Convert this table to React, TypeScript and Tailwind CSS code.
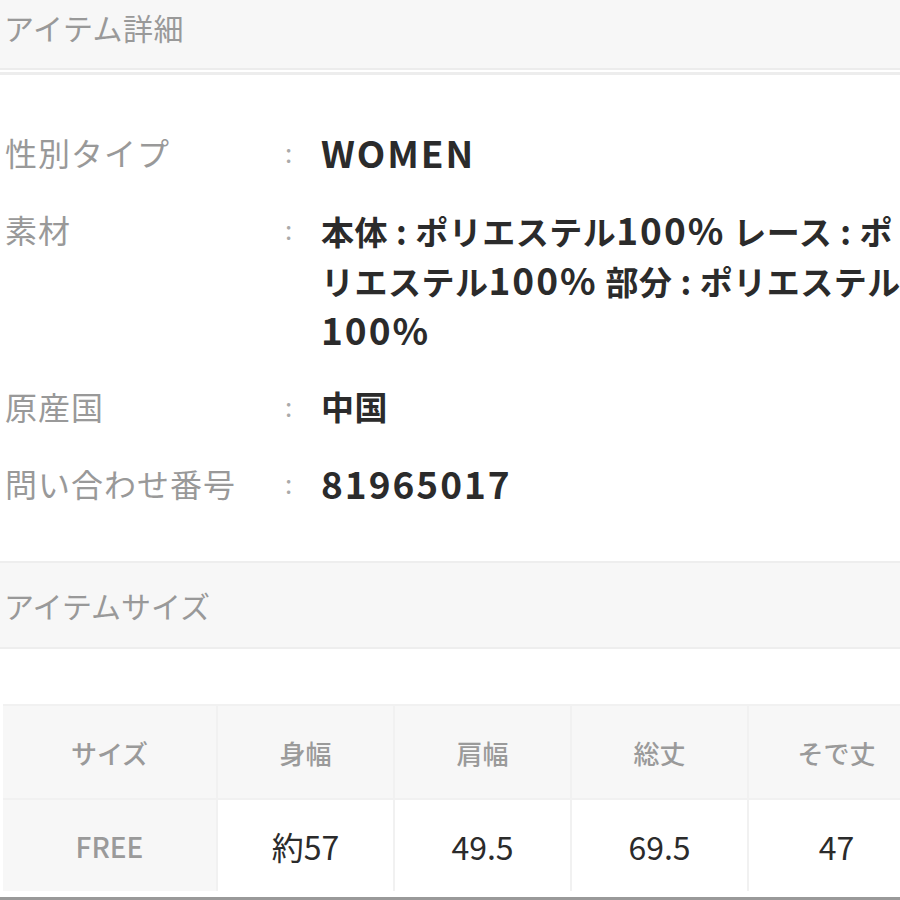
import React from "react";

const font = { fontFamily: '"Noto Sans CJK JP", "Noto Sans", sans-serif' };

function Mixed({ text }: { text: string }) {
  const parts = text.match(/[A-Za-z0-9%.]+|[^A-Za-z0-9%.]+/g) || [];
  return (
    <>
      {parts.map((p, i) =>
        /[A-Za-z0-9%.]/.test(p[0]) ? (
          <span key={i} className="text-[37px] tracking-[2px] font-semibold">
            {p}
          </span>
        ) : (
          <span key={i}>{p}</span>
        )
      )}
    </>
  );
}

function Row({ label, lines }: { label: string; lines: string[] }) {
  return (
    <div className="flex items-start">
      <div className="w-[285px] shrink-0 pl-[5px] text-[32px] leading-[50px] tracking-[1px] text-[#999999]">
        {label}
      </div>
      <div className="w-[36px] shrink-0 text-[26px] leading-[50px] text-[#aaaaaa]">:</div>
      <div className="flex flex-col font-bold text-[#2b2b2b] text-[33px] leading-[50px] tracking-[0.5px]">
        {lines.map((l, i) => (
          <div key={i} className="whitespace-nowrap h-[50px]">
            <Mixed text={l} />
          </div>
        ))}
      </div>
    </div>
  );
}

export default function App() {
  const cols = ["サイズ", "身幅", "肩幅", "総丈", "そで丈"];
  const vals = ["約57", "49.5", "69.5", "47"];
  return (
    <div className="w-[900px] h-[900px] overflow-hidden bg-white" style={font}>
      <div className="h-[68px] bg-[#f7f7f7] flex items-center pb-[14px] pl-[4px] text-[30px] text-[#999999] tracking-[0.5px]">
        アイテム詳細
      </div>
      <div className="h-[2px] bg-[#ececec]" />
      <div className="h-[2px] bg-white" />
      <div className="h-[3px] bg-[#ededed]" />

      <div className="flex flex-col gap-[27px] pt-[52px]">
        <Row label="性別タイプ" lines={["WOMEN"]} />
        <Row
          label="素材"
          lines={[
            "本体 : ポリエステル100% レース : ポ",
            "リエステル100% 部分 : ポリエステル",
            "100%",
          ]}
        />
        <Row label="原産国" lines={["中国"]} />
        <Row label="問い合わせ番号" lines={["81965017"]} />
      </div>

      <div className="mt-[53px] border-t-2 border-[#eeeeee] h-[88px] bg-[#f7f7f7] flex items-center pl-[4px] text-[30px] text-[#999999] border-b-2">
        アイテムサイズ
      </div>

      <div className="mt-[55px] pl-[3px]">
        <div className="grid grid-cols-[213px_175px_175px_175px_175px] gap-[2px] bg-[#f1f1f1] w-[925px] border-t-2 border-[#f1f1f1]">
          {cols.map((c) => (
            <div
              key={c}
              className="h-[92px] bg-[#f7f7f7] flex items-center justify-center text-[26px] text-[#9a9a9a] font-medium"
            >
              {c}
            </div>
          ))}
          <div className="h-[91px] bg-[#f7f7f7] flex items-center justify-center text-[28px] text-[#9a9a9a] font-medium">
            FREE
          </div>
          {vals.map((v) => (
            <div
              key={v}
              className="h-[91px] bg-white flex items-center justify-center text-[32px] text-[#2b2b2b]"
            >
              {v}
            </div>
          ))}
        </div>
        <div className="h-[6px] bg-white" />
      </div>
      <div className="h-[3px] bg-[#999999]" />
    </div>
  );
}
